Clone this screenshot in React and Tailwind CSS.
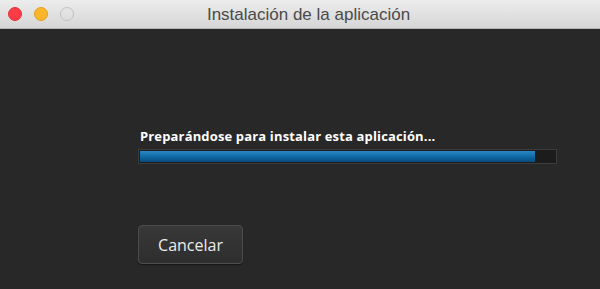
import React from 'react';

const App = () => {
    return (
        <div className="w-[600px] h-[289px] flex flex-col bg-[#282828] overflow-hidden font-['Open_Sans',sans-serif]">
            {/* Barra de título */}
            <div className="relative h-[29px] shrink-0 flex items-center justify-center bg-gradient-to-b from-[#ececec] to-[#d6d6d6] border-b border-[#b5b5b5]">
                <div className="absolute left-[8px] top-[7px] flex gap-[12px]">
                    <span className="w-[14px] h-[14px] rounded-full bg-[#fc3c44] border border-[#e0343b]" />
                    <span className="w-[14px] h-[14px] rounded-full bg-[#fbb52a] border border-[#e0a020]" />
                    <span className="w-[14px] h-[14px] rounded-full border-[1.5px] border-[#c2c2c2]" />
                </div>
                <span className="ml-[17px] text-[17px] text-[#4a4a4a] font-['Liberation_Sans',sans-serif] pt-[1px]">
                    Instalación de la aplicación
                </span>
            </div>

            {/* Contenido */}
            <div className="flex flex-col pl-[138px] pt-[99px]">
                <p className="pl-[2px] text-[13px] leading-[16px] font-bold text-white tracking-[0.15px]">
                    Preparándose para instalar esta aplicación...
                </p>
                <div className="mt-[5px] w-[419px] h-[15px] bg-[#1c1c1c] border border-[#3c3c3c] p-px">
                    <div className="h-full w-[395px] bg-gradient-to-b from-[#2a89c7] via-[#0f6aa5] to-[#0a4b7c]" />
                </div>
                <button
                    type="button"
                    className="mt-[61px] w-[105px] h-[39px] rounded-[4px] border border-[#4d4d4d] bg-gradient-to-b from-[#383838] to-[#2e2e2e] text-[#ececec] text-[16px] font-['Open_Sans',sans-serif] shadow-[0_1px_1px_rgba(0,0,0,0.5)]"
                >
                    Cancelar
                </button>
            </div>
        </div>
    );
};

export default App;
